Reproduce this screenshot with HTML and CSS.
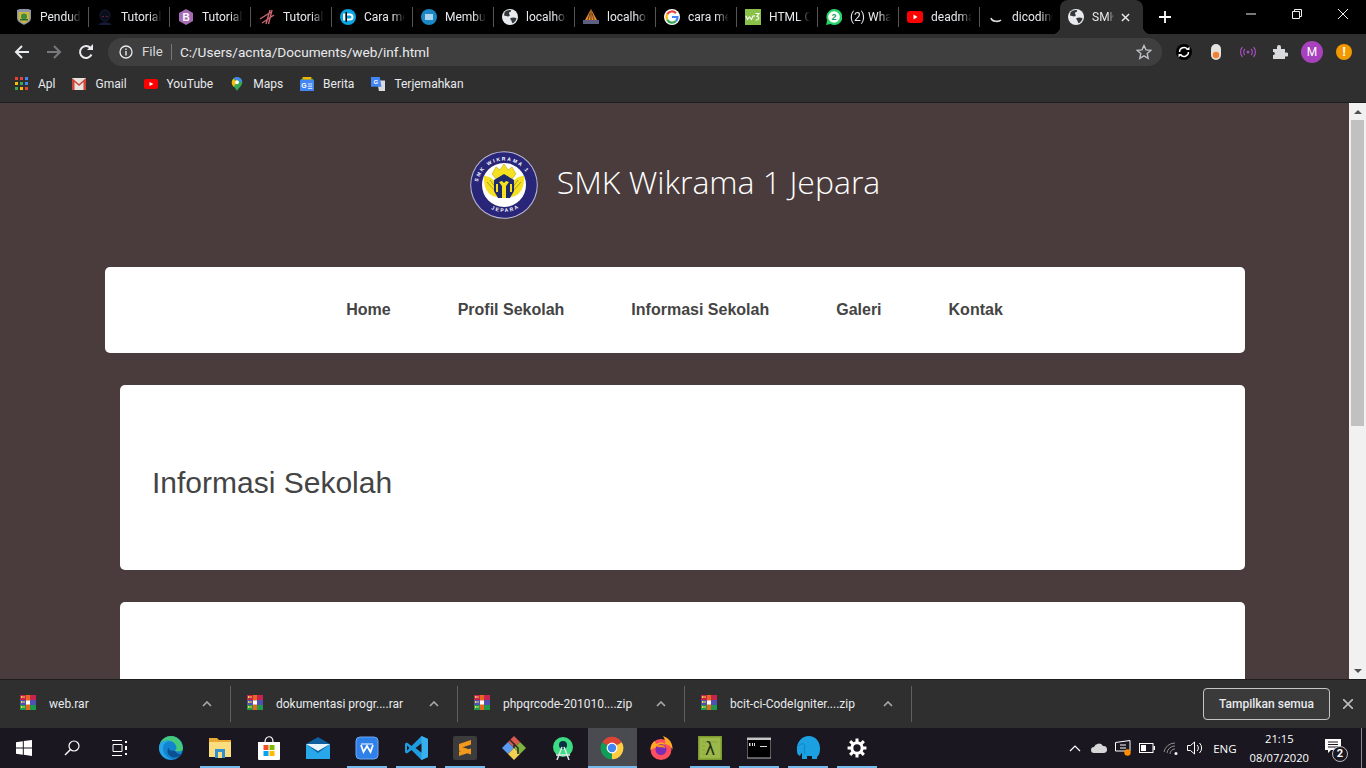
FILE: index.html
```html
<!DOCTYPE html>
<html lang="en">
<head>
  <meta charset="UTF-8">
  <title>SMK Wikrama 1 Jepara</title>
  <link rel="stylesheet" href="styles.css">
</head>
<body>
  <svg class="defs" width="0" height="0"><defs>
    <g id="globe"><circle cx="8" cy="8" r="8" fill="#e8eaed"/><path d="M2.500 3.500C4 1.500 7 .8 9 1.200c.5 1-.5 2-2 2.300-.3 1.500 1 2 .7 3.300-1.500 1.300-3.500.2-5.700-.3z" fill="#33363a"/><path d="M8.500 9c2-.8 4.500-.8 6 .3-.4 2.300-2 4.200-3.800 5-.8-.8-1-2-1.300-2.800-.8-.5-1.200-1.500-.9-2.500z" fill="#33363a"/></g>
    <g id="rar"><rect width="16" height="5" fill="#c8234d"/><rect y="5" width="16" height="5" fill="#5050b0"/><rect y="10" width="16" height="5" fill="#1f9a4a"/><rect x="6" width="4" height="15" fill="#e8661f"/><rect x="6" y="5.500" width="4" height="4" fill="#fff"/><path d="M1 1h1.500v2H1zM1 6h1.500v2H1zM1 11h1.500v2H1z" fill="#f4d84a"/><path d="M3.500 1h1v2h-1zM3.500 6h1v2h-1zM3.500 11h1v2h-1z" fill="#f4d84a"/></g>
  </defs></svg>

  <div class="tabstrip">
    <div class="tab sep"><svg class="fav" viewBox="0 0 16 16"><path d="M1 1l3-1h8l3 1v8c0 4-4 5-7 7-3-2-7-3-7-7z" fill="#8d93a8"/><path d="M2.500 3h11v6c0 3-3 4-5.500 5.500C5.500 13 2.500 12 2.500 9z" fill="#c9b83a"/><circle cx="8" cy="7.500" r="3" fill="#3f8a3f"/><path d="M4 10h8v1.500H4z" fill="#2f6a3f"/></svg><span class="tab-title">Pendud</span></div>
    <div class="tab sep"><svg class="fav" viewBox="0 0 16 16"><path d="M3 6a5 5 0 0 1 10 0c0 4-2 6-5 6s-5-2-5-6z" fill="#0b0d18" stroke="#1c2348" stroke-width=".8"/><path d="M1.500 16c1-4 12-4 13 0z" fill="#151a38"/><path d="M5 7h2v1H5zM9 7h2v1H9z" fill="#6a2330"/></svg><span class="tab-title">Tutorial</span></div>
    <div class="tab sep"><svg class="fav" viewBox="0 0 16 16"><path d="M8 0l7 4v8l-7 4-7-4V4z" fill="#a66bb5"/><text x="8" y="12" font-size="10" font-weight="700" text-anchor="middle" fill="#fff" font-family="Liberation Sans">B</text></svg><span class="tab-title">Tutorial</span></div>
    <div class="tab sep"><svg class="fav" viewBox="0 0 16 16"><path d="M1 10L12 3M3 14L15 6M7 15L11 1M9.500 15L13 1" stroke="#c9656f" stroke-width="1.400" fill="none"/></svg><span class="tab-title">Tutorial</span></div>
    <div class="tab sep"><svg class="fav" viewBox="0 0 16 16"><circle cx="8" cy="8" r="8" fill="#08a5e0"/><path d="M3 4.500h2.500v7H3zM7 4.500h3a3.500 3.500 0 0 1 0 7H7V9.500h3a1.500 1.500 0 0 0 0-3H7z" fill="#fff"/><path d="M5.500 3h1.500v10H5.500z" fill="#000"/></svg><span class="tab-title">Cara me</span></div>
    <div class="tab sep"><svg class="fav" viewBox="0 0 16 16"><circle cx="8" cy="8" r="8" fill="#1b87c4"/><rect x="4" y="5" width="8" height="6" fill="#a9d6ee"/></svg><span class="tab-title">Membu</span></div>
    <div class="tab sep"><svg class="fav" viewBox="0 0 16 16"><use href="#globe"/></svg><span class="tab-title">localhos</span></div>
    <div class="tab sep"><svg class="fav" viewBox="0 0 16 16"><path d="M2 11L8 0l6 11z" fill="#e98a2b"/><path d="M8 1v10M5 11l2-7M11 11L9 4" stroke="#40261a" stroke-width=".8" fill="none"/><rect x="0" y="11" width="16" height="4" fill="#5d5f80"/></svg><span class="tab-title">localhos</span></div>
    <div class="tab sep"><svg class="fav" viewBox="0 0 16 16"><circle cx="8" cy="8" r="8" fill="#fff"/><path d="M8 8h5.500A5.500 5.500 0 0 1 12 12" fill="none" stroke="#4285f4" stroke-width="2.200"/><path d="M11.900 4.100A5.500 5.500 0 0 0 3.200 5.300" fill="none" stroke="#ea4335" stroke-width="2.200"/><path d="M3.200 5.300a5.500 5.500 0 0 0 0 5.400" fill="none" stroke="#fbbc05" stroke-width="2.200"/><path d="M3.200 10.700A5.500 5.500 0 0 0 12 12" fill="none" stroke="#34a853" stroke-width="2.200"/></svg><span class="tab-title">cara me</span></div>
    <div class="tab sep"><svg class="fav" viewBox="0 0 16 16"><rect width="16" height="16" fill="#8ac249"/><path d="M1 7l1.500 3.500L4.500 8l2 2.500L8 7h2M10.500 4.500H14L12 7.500c2.500 0 2.500 4-1.500 3.500" stroke="#fff" stroke-width="1.100" fill="none"/></svg><span class="tab-title">HTML C</span></div>
    <div class="tab sep"><svg class="fav" viewBox="0 0 16 16"><path d="M0 16l1.200-4.500A8 8 0 1 1 4.500 15z" fill="#25d366"/><circle cx="8" cy="8" r="5.800" fill="#fff"/><text x="8" y="11" font-size="9" font-weight="700" text-anchor="middle" fill="#0f9d58" font-family="Liberation Sans">2</text></svg><span class="tab-title">(2) Wha</span></div>
    <div class="tab sep"><svg class="fav" viewBox="0 0 16 16"><rect y="2" width="16" height="12" rx="3" fill="#f00"/><path d="M6.500 5.500l4 2.500-4 2.500z" fill="#fff"/></svg><span class="tab-title">deadma</span></div>
    <div class="tab"><svg class="fav" viewBox="0 0 16 16"><path d="M3 9c1 4 8 4 10 2" stroke="#ddd" stroke-width="1.600" fill="none"/></svg><span class="tab-title">dicoding</span></div>
    <div class="tab tab-active"><svg class="fav" viewBox="0 0 16 16"><use href="#globe"/></svg><span class="tab-title">SMK</span><svg class="tab-x" viewBox="0 0 10 10"><path d="M1 1l8 8M9 1l-8 8" stroke="#e8eaed" stroke-width="1.600"/></svg></div>
    <svg class="newtab" viewBox="0 0 12 12"><path d="M6 0v12M0 6h12" stroke="#fff" stroke-width="1.800"/></svg>
    <div class="win-btns">
      <svg viewBox="0 0 10 10"><path d="M0 5h10" stroke="#eee"/></svg>
      <svg viewBox="0 0 10 10"><path d="M.5 2.500h7v7h-7zM2.500 2.500v-2h7v7h-2" stroke="#eee" fill="none"/></svg>
      <svg viewBox="0 0 10 10"><path d="M0 0l10 10M10 0L0 10" stroke="#eee"/></svg>
    </div>
  </div>

  <div class="toolbar">
    <svg class="nav-ic" viewBox="0 0 16 16"><path d="M15 8H2M8 2L2 8l6 6" stroke="#e8eaed" stroke-width="2" fill="none"/></svg>
    <svg class="nav-ic" viewBox="0 0 16 16"><path d="M1 8h13M8 2l6 6-6 6" stroke="#77797c" stroke-width="2" fill="none"/></svg>
    <svg class="nav-ic" viewBox="0 0 16 16"><path d="M13.500 10.500A6 6 0 1 1 12.500 4" stroke="#e8eaed" stroke-width="2" fill="none"/><path d="M9 6h6V0z" fill="#e8eaed"/></svg>
    <div class="omnibox">
      <svg class="info" viewBox="0 0 14 14"><circle cx="7" cy="7" r="6" stroke="#e8eaed" stroke-width="1.300" fill="none"/><path d="M7 6v4.500M7 3.500v1.500" stroke="#e8eaed" stroke-width="1.400"/></svg>
      <span class="scheme">File</span>
      <span class="url">C:/Users/acnta/Documents/web/inf.html</span>
      <svg class="star" viewBox="0 0 16 16"><path d="M8 1.500l2 4.400 4.700.5-3.500 3.200 1 4.700L8 11.900l-4.200 2.400 1-4.700L1.300 6.400 6 5.900z" stroke="#bdc1c6" stroke-width="1.400" fill="none"/></svg>
    </div>
    <div class="ext-icons">
      <svg viewBox="0 0 16 16"><circle cx="8" cy="8" r="8" fill="#000"/><path d="M3.500 8a4.500 4.500 0 0 1 8-2.800M12.500 8a4.500 4.500 0 0 1-8 2.800" stroke="#fff" stroke-width="1.400" fill="none"/><path d="M10 6h3.500V2.500zM6 10H2.500v3.500z" fill="#fff"/></svg>
      <svg viewBox="0 0 16 16"><rect x="3" y="0" width="10" height="16" rx="5" fill="#e6e2de"/><circle cx="8" cy="11" r="3.200" fill="#f28033"/></svg>
      <svg viewBox="0 0 16 16"><circle cx="8" cy="8" r="1.500" fill="#a24dbb"/><path d="M5 5a4 4 0 0 0 0 6M11 5a4 4 0 0 1 0 6M2.500 3a7.500 7.500 0 0 0 0 10M13.500 3a7.500 7.500 0 0 1 0 10" stroke="#a24dbb" stroke-width="1.200" fill="none"/></svg>
      <svg viewBox="0 0 16 16"><path d="M1 5h4V3a2 2 0 0 1 4 0v2h4v3.500h1.500a2 2 0 0 1 0 4H13V15H1v-4h1a2 2 0 0 0 0-3H1z" fill="#d8dadd"/></svg>
      <span class="avatar">M</span>
      <span class="alert">!</span>
    </div>
  </div>

  <div class="bookmarks">
    <div class="bm"><svg class="bm-ic" viewBox="0 0 14 14"><path d="M0 0h3v3H0z" fill="#ea4335"/><path d="M5 0h3v3H5z" fill="#ea4335"/><path d="M10 0h3v3h-3z" fill="#4285f4"/><path d="M0 5h3v3H0z" fill="#fbbc05"/><path d="M5 5h3v3H5z" fill="#34a853"/><path d="M10 5h3v3h-3z" fill="#4285f4"/><path d="M0 10h3v3H0z" fill="#34a853"/><path d="M5 10h3v3H5z" fill="#fbbc05"/><path d="M10 10h3v3h-3z" fill="#ea4335"/></svg>Apl</div>
    <div class="bm"><svg class="bm-ic" viewBox="0 0 14 12"><rect width="14" height="12" fill="#e8e3de"/><path d="M0 0l7 6 7-6v12h-2.500V4L7 8 2.500 4v8H0z" fill="#d0453a"/></svg>Gmail</div>
    <div class="bm"><svg class="bm-ic" viewBox="0 0 14 10"><rect width="14" height="10" rx="2" fill="#f00"/><path d="M5.500 3l4 2-4 2z" fill="#fff"/></svg>YouTube</div>
    <div class="bm"><svg class="bm-ic" viewBox="0 0 12 16"><path d="M6 0a6 6 0 0 1 6 6c0 4-4 6-6 10-2-4-6-6-6-10a6 6 0 0 1 6-6z" fill="#34a853"/><path d="M6 0a6 6 0 0 1 6 6L2 2a6 6 0 0 1 4-2z" fill="#4285f4"/><path d="M0 6a6 6 0 0 1 2-4l4 4-4 5c-1-1-2-3-2-5z" fill="#fbbc05"/><circle cx="6" cy="6" r="2.200" fill="#fff"/></svg>Maps</div>
    <div class="bm"><svg class="bm-ic" viewBox="0 0 16 16"><path d="M1 2h14v4H1z" fill="#4caf50"/><path d="M3 0h10v3H3z" fill="#f4b400"/><rect y="3" width="16" height="13" rx="1" fill="#4285f4"/><path d="M9 8h5M9 10.500h5M9 13h5" stroke="#fff"/><text x="4.500" y="13" font-size="8" font-weight="700" text-anchor="middle" fill="#fff" font-family="Liberation Sans">G</text></svg>Berita</div>
    <div class="bm"><svg class="bm-ic" viewBox="0 0 16 16"><path d="M7 4h9v12H9z" fill="#dadce0"/><path d="M0 0h10l2 11H0z" fill="#4285f4"/><text x="5.500" y="8" font-size="7" font-weight="700" text-anchor="middle" fill="#fff" font-family="Liberation Sans">G</text></svg>Terjemahkan</div>
  </div>

  <div class="viewport">
    <div class="page">
      <header class="site-head">
        <svg class="logo" viewBox="0 0 68 68">
          <circle cx="34" cy="34" r="33.800" fill="#b9b8d8"/>
          <circle cx="34" cy="34" r="32.800" fill="#29267a"/>
          <circle cx="34" cy="34" r="22" fill="#fff"/>
          <path d="M14 25c4 0 9 2 11 6l3 15c-7 0-15-6-14-21zM54 25c-4 0-9 2-11 6l-3 15c7 0 15-6 14-21z" fill="#f5e120"/>
          <path d="M17 31l8 9M20 29l6 8M42 37l6-8M43 40l8-9" stroke="#8a8a30" stroke-width=".8"/>
          <path d="M22 23l4-7 4 3 4-6 4 6 4-3 4 7-4 5H26z" fill="#f5e120" stroke="#b9a520" stroke-width=".6"/>
          <path d="M34 23l10 6v11l-4 7H28l-4-7V29z" fill="#1d2b6e"/>
          <path d="M29 31l3 4v12h4V35l3-4-3-1-2 2-2-2z" fill="#f5e120"/>
          <path d="M26 33h2v8h-2zM40 33h2v8h-2z" fill="#f5e120"/>
          <path id="rim" d="M7.500 36a26.500 26.500 0 0 1 53 0" fill="none"/>
          <text font-size="5" font-weight="700" fill="#fff" font-family="Liberation Sans" letter-spacing="1.700"><textPath href="#rim" startOffset="5">SMK WIKRAMA 1</textPath></text>
          <path id="rimb" d="M13 52a29 29 0 0 0 42 0" fill="none"/>
          <text font-size="5" font-weight="700" fill="#fff" font-family="Liberation Sans" letter-spacing="1.700"><textPath href="#rimb" startOffset="10">JEPARA</textPath></text>
        </svg>
        <h1 class="site-title">SMK Wikrama 1 Jepara</h1>
      </header>
      <nav class="main-nav">
        <a>Home</a>
        <a>Profil Sekolah</a>
        <a>Informasi Sekolah</a>
        <a>Galeri</a>
        <a>Kontak</a>
      </nav>
      <section class="card card-title">
        <h2>Informasi Sekolah</h2>
      </section>
      <section class="card card-next"></section>
    </div>
    <div class="scrollbar">
      <svg class="sb-arrow" viewBox="0 0 8 4"><path d="M0 4l4-4 4 4z" fill="#505050"/></svg>
      <div class="sb-track"><div class="sb-thumb"></div></div>
      <svg class="sb-arrow" viewBox="0 0 8 4"><path d="M0 0l4 4 4-4z" fill="#505050"/></svg>
    </div>
  </div>

  <div class="downloads">
    <div class="dl"><svg class="rar" viewBox="0 0 16 15"><use href="#rar"/></svg><span class="dl-name">web.rar</span><svg class="caret" viewBox="0 0 10 6"><path d="M1 5l4-4 4 4" stroke="#a9abad" stroke-width="1.600" fill="none"/></svg></div>
    <div class="dl"><svg class="rar" viewBox="0 0 16 15"><use href="#rar"/></svg><span class="dl-name">dokumentasi progr....rar</span><svg class="caret" viewBox="0 0 10 6"><path d="M1 5l4-4 4 4" stroke="#a9abad" stroke-width="1.600" fill="none"/></svg></div>
    <div class="dl"><svg class="rar" viewBox="0 0 16 15"><use href="#rar"/></svg><span class="dl-name">phpqrcode-201010....zip</span><svg class="caret" viewBox="0 0 10 6"><path d="M1 5l4-4 4 4" stroke="#a9abad" stroke-width="1.600" fill="none"/></svg></div>
    <div class="dl"><svg class="rar" viewBox="0 0 16 15"><use href="#rar"/></svg><span class="dl-name">bcit-ci-CodeIgniter....zip</span><svg class="caret" viewBox="0 0 10 6"><path d="M1 5l4-4 4 4" stroke="#a9abad" stroke-width="1.600" fill="none"/></svg></div>
    <button class="show-all">Tampilkan semua</button>
    <svg class="dl-close" viewBox="0 0 10 10"><path d="M0 0l10 10M10 0L0 10" stroke="#bdbdbd" stroke-width="1.600"/></svg>
  </div>

  <div class="taskbar">
    <svg class="win-logo" viewBox="0 0 16 16"><path d="M0 2.200l6.800-1v6.300H0zM7.800 1l8.200-1v7.500H7.800zM0 8.500h6.800v6.300l-6.800-1zM7.800 8.500H16V16l-8.200-1.200z" fill="#fff"/></svg>
    <svg class="tb-small" viewBox="0 0 16 16"><circle cx="10" cy="6" r="5" stroke="#fff" stroke-width="1.200" fill="none"/><path d="M6.500 9.500L1 15" stroke="#fff" stroke-width="1.400"/></svg>
    <svg class="tb-small" viewBox="0 0 16 16"><path d="M0 .500h10M0 15.500h10M1 4.500h9v7H1z" stroke="#fff" fill="none"/><path d="M13 1h2v2h-2zM13 6h2v4h-2zM13 13h2v2h-2z" fill="#fff"/></svg>
    <div class="tb-apps">
      <span class="app"><svg viewBox="0 0 24 24"><circle cx="12" cy="12" r="12" fill="#1285d0"/><path d="M24 13C24 6 18.500 0 12 0 7 0 2.500 3 1 8c3-3.500 8-4.500 12-2.500 3 1.500 4.500 4 4.500 6.500 0 1-.5 2-2 2.500 3 1.500 8.500 1 8.500-1.500z" fill="#45c97a"/><path d="M1 8c3-3.500 8-4.500 12-2.500-5-1-9 2-9 7 0 5 4 10 10 11C6 24.500 0 18 0 12c0-1.500.3-3 1-4z" fill="#29a4e6"/><path d="M15.500 14.500c-3 1-6-.500-6-3-2.500 4-.5 9 5 10 3.500.5 6.500-1 8.500-3.500-3 1-5.500-1-7.500-3.500z" fill="#0c4f93"/></svg></span>
      <span class="app on"><svg viewBox="0 0 24 20"><path d="M1 0h8l2 2h12v17H1z" fill="#e8a935"/><path d="M1 4h22v15H1z" fill="#f9dd7f"/><path d="M7 11h10v9H7z" fill="#2f8fd0"/><path d="M10 14h4v6h-4z" fill="#f9dd7f"/></svg></span>
      <span class="app"><svg viewBox="0 0 24 24"><path d="M8 6c0-7 8-7 8 0" stroke="#fff" fill="none" stroke-width="1.200"/><path d="M1 6h22v17a1 1 0 0 1-1 1H2a1 1 0 0 1-1-1z" fill="#fff"/><path d="M6.500 9H11.500v5h-5z" fill="#f25022"/><path d="M12.500 9h5v5h-5z" fill="#7fba00"/><path d="M6.500 15h5v5h-5z" fill="#00a4ef"/><path d="M12.500 15h5v5h-5z" fill="#ffb900"/></svg></span>
      <span class="app"><svg viewBox="0 0 24 24"><path d="M12 1l12 7v15H0V8z" fill="#0f5f9e"/><path d="M0 8l12 9 12-9v15H0z" fill="#28a8ea"/><path d="M0 8h24l-12 7z" fill="#e8f4fb"/></svg></span>
      <span class="app on"><svg viewBox="0 0 24 24"><rect x="1" y="1" width="22" height="22" rx="4" fill="#2f80e8" stroke="#6aa8f2"/><path d="M6 9l2.500 7L12 10l3.500 6L18 9" stroke="#fff" stroke-width="1.800" fill="none"/><path d="M6 8h12" stroke="#fff" stroke-width="1"/></svg></span>
      <span class="app on"><svg viewBox="0 0 24 24"><path d="M17.500 0L7.500 10 3 6.500 1 7.500v9l2 1 4.500-3.500 10 10 6.500-3V3z" fill="#1f9be0"/><path d="M18 7v10l-6.500-5z" fill="#1a1720"/><path d="M3 9.500v5l2.500-2.500z" fill="#1a1720"/><path d="M17.500 0L24 3v18l-6.500 3z" fill="#38b0ee"/></svg></span>
      <span class="app on"><svg viewBox="0 0 24 24"><rect width="24" height="24" rx="2" fill="#3c3c3c"/><path d="M18 4v4.500L6 12.500V8zM6 10l12 4v4.500L6 14.500zM18 12.500V16L6 20v-4.500z" fill="#f39a1c"/></svg></span>
      <span class="app"><svg viewBox="0 0 24 24"><path d="M12 0l6 6-6 6-6-6z" fill="#d9584b"/><path d="M0 12l6-6 6 6-6 6z" fill="#5b9bf0"/><path d="M12 12l6-6 6 6-6 6z" fill="#7fb53f"/><path d="M6 18l6-6 6 6-6 6z" fill="#f0d050"/><path d="M8 4l8 8v6M12 12v-5" stroke="#2a2a2a" stroke-width="1.500" fill="none"/></svg></span>
      <span class="app"><svg viewBox="0 0 24 24"><circle cx="12" cy="11" r="10" fill="#3ddc84"/><circle cx="12" cy="9" r="4" fill="#083042"/><path d="M11 11L6 24M13 11l5 13M5 19h14" stroke="#dfe7e8" stroke-width="1.500" fill="none"/></svg></span>
      <span class="app app-active"><svg viewBox="0 0 24 24"><path d="M12 12L2.200 6.300A11.300 11.300 0 0 1 21.800 6.300z" fill="#db4437"/><path d="M12 12L2.200 6.300A11.300 11.300 0 0 0 12 23.300z" fill="#0f9d58"/><path d="M12 12L21.800 6.300A11.300 11.300 0 0 1 12 23.300z" fill="#ffcd40"/><circle cx="12" cy="12" r="5.400" fill="#fff"/><circle cx="12" cy="12" r="4.200" fill="#4285f4"/></svg></span>
      <span class="app"><svg viewBox="0 0 24 24"><circle cx="12" cy="13.500" r="10.500" fill="#ff4f5e"/><path d="M1.500 13.500C1.500 9 4 6 6 5c0 2 1 3 2 3 2-2 6-2 8 0 1-3-1-6-2-8 6 2 10 7 9.500 13.500-2-3-4-5-7-5.500z" fill="#ffa925"/><circle cx="12" cy="13.500" r="5.500" fill="#7b2db5"/><path d="M6.500 10c3-2 9-2 10 2-3-1-7 0-10-2z" fill="#ff8a1f"/></svg></span>
      <span class="app on"><svg viewBox="0 0 24 24"><rect width="24" height="24" fill="#7a9a2e"/><rect x="1.500" y="1.500" width="21" height="21" fill="#9cb84a"/><path d="M4 6h16M4 10h3M4 14h3M4 18h3" stroke="#88a53c" fill="none"/><text x="12" y="19" font-size="17" text-anchor="middle" fill="#24301a" font-family="DejaVu Sans">λ</text></svg></span>
      <span class="app on"><svg viewBox="0 0 24 20"><rect width="24" height="20" fill="#000" stroke="#b8b8b8"/><rect width="24" height="2" fill="#c6c6c6"/><path d="M2 5h1.500v3H2zM5 5h1v3H5zM7 5h1v3H7zM13 8h7v1h-7z" fill="#ddd"/></svg></span>
      <span class="app on"><svg viewBox="0 0 24 24"><path d="M1 15C0 6 6 0 13 0c6 0 11 5 11 12 0 5-1 7-3 9v2h-5v-3h-5v3H6v-6c-1 0-1 1-2 3-2-1-3-2-3-5z" fill="#1ba1e2"/><path d="M3 10c2-3 5-3 6 0-1 3-1 6 0 8" stroke="#0f7fc0" fill="none"/></svg></span>
      <span class="app on"><svg viewBox="-2 -2 28 28"><circle cx="12" cy="12" r="6" fill="none" stroke="#fff" stroke-width="3.500"/><path d="M12 1v5M12 18v5M1 12h5M18 12h5M4 4l4 4M16 16l4 4M20 4l-4 4M8 16l-4 4" stroke="#fff" stroke-width="3.500"/></svg></span>
    </div>
    <div class="tray">
      <svg class="tray-up" viewBox="0 0 12 7"><path d="M1 6l5-5 5 5" stroke="#fff" fill="none" stroke-width="1.200"/></svg>
      <svg class="tray-cloud" viewBox="0 0 16 10"><path d="M3 10a3 3 0 0 1 0-6 5 5 0 0 1 9-1 3.500 3.500 0 0 1 1 7z" fill="#d6d6d6"/></svg>
      <svg class="tray-ic" viewBox="0 0 16 16"><path d="M.500 2.500L15 .500V11H.500z" stroke="#fff" fill="none"/><path d="M5 5h6M5 8h6" stroke="#fff"/><circle cx="12.500" cy="12.500" r="3.200" fill="#ff8c00"/></svg>
      <svg class="tray-ic" viewBox="0 0 16 10"><rect x=".5" y=".5" width="13.500" height="9" stroke="#fff" fill="none"/><rect x="2" y="2" width="5" height="6" fill="#fff"/><rect x="14.500" y="3" width="1.500" height="4" fill="#fff"/></svg>
      <svg class="tray-ic" viewBox="0 0 16 16"><path d="M1 12a11 11 0 0 1 11-9M4 13a8 8 0 0 1 8-7M7 14a5 5 0 0 1 5-5" stroke="#8f8f8f" fill="none"/><circle cx="13" cy="13.500" r="1.500" fill="#fff"/></svg>
      <svg class="tray-ic" viewBox="0 0 16 16"><path d="M.500 5.500h3l4-3.500v12l-4-3.500h-3z" stroke="#fff" fill="none"/><path d="M10 5a4 4 0 0 1 0 6M12.500 3a7 7 0 0 1 0 10" stroke="#fff" fill="none"/></svg>
      <span class="lang">ENG</span>
      <div class="clock"><span>21:15</span><span>08/07/2020</span></div>
      <div class="notif"><svg viewBox="0 0 16 16"><path d="M0 0h16v11H6l-3 3v-3H0z" fill="#fff"/><path d="M3 3h10M3 5.500h10M3 8h10" stroke="#1a1720"/></svg><span class="notif-badge">2</span></div>
      <div class="desktop-edge"></div>
    </div>
  </div>
</body>
</html>
```

FILE: styles.css
```css
* {
  margin: 0;
  padding: 0;
  box-sizing: border-box;
}

html, body {
  height: 768px;
  overflow: hidden;
}

body {
  display: flex;
  flex-direction: column;
  font-family: 'Roboto', 'Noto Sans', sans-serif;
  font-size: 12px;
  background: #2f2f2f;
}

.defs {
  position: absolute;
}

.tabstrip {
  height: 34px;
  background: #000;
  display: flex;
  align-items: center;
  padding-left: 8px;
  color: #e8eaed;
  flex-shrink: 0;
}

.tab {
  width: 81px;
  height: 34px;
  display: flex;
  align-items: center;
  padding-left: 8px;
  flex-shrink: 0;
}

.tab.sep {
  background: linear-gradient(#555, #555) no-repeat right 7px / 1px 20px;
}

.fav {
  width: 16px;
  height: 16px;
  flex-shrink: 0;
  margin-right: 8px;
}

.tab-title {
  width: 41px;
  white-space: nowrap;
  -webkit-mask-image: linear-gradient(90deg, #000 70%, transparent);
  mask-image: linear-gradient(90deg, #000 70%, transparent);
}

.tab-active {
  width: 83px;
  margin-left: -1px;
  background: #2f2f2f;
  border-radius: 8px 8px 0 0;
  position: relative;
}

.tab-active::before,
.tab-active::after {
  content: "";
  position: absolute;
  bottom: 0;
  width: 8px;
  height: 8px;
}

.tab-active::before {
  left: -8px;
  background: radial-gradient(circle at 0 0, transparent 8px, #2f2f2f 8.500px);
}

.tab-active::after {
  right: -8px;
  background: radial-gradient(circle at 100% 0, transparent 8px, #2f2f2f 8.500px);
}

.tab-active .tab-title {
  width: 22px;
}

.tab-x {
  width: 9px;
  height: 9px;
  margin-left: 7px;
}

.newtab {
  width: 12px;
  height: 12px;
  margin-left: 16px;
}

.win-btns {
  margin-left: auto;
  display: flex;
  height: 28px;
  align-self: flex-start;
  align-items: center;
}

.win-btns svg {
  width: 10px;
  height: 10px;
  margin: 0 18px;
}

.toolbar {
  height: 36px;
  display: flex;
  align-items: center;
  padding-left: 14px;
  flex-shrink: 0;
}

.nav-ic {
  width: 16px;
  height: 16px;
  margin-right: 16px;
}

.omnibox {
  width: 1054px;
  height: 28px;
  margin-left: -2px;
  background: #3f3f3f;
  border-radius: 14px;
  display: flex;
  align-items: center;
  padding-left: 11px;
  color: #e8eaed;
  font-size: 14px;
}

.info {
  width: 14px;
  height: 14px;
  margin-right: 9px;
}

.scheme {
  font-size: 13.300px;
  color: #d8d9db;
  padding-right: 8px;
  margin-right: 8px;
  border-right: 1px solid #777;
  line-height: 16px;
}

.url {
  font-size: 13.600px;
}

.star {
  width: 16px;
  height: 16px;
  margin-left: auto;
  margin-right: 10px;
}

.ext-icons {
  display: flex;
  align-items: center;
  gap: 16px;
  margin-left: 14px;
}

.ext-icons svg {
  width: 16px;
  height: 16px;
}

.avatar {
  width: 22px;
  height: 22px;
  margin: 0 -3px;
  border-radius: 50%;
  background: #a742bc;
  color: #fff;
  font-size: 12px;
  text-align: center;
  line-height: 22px;
}

.alert {
  width: 16px;
  height: 16px;
  border-radius: 50%;
  background: #f29900;
  color: #fff;
  font-weight: 700;
  font-size: 12px;
  text-align: center;
  line-height: 16px;
}

.bookmarks {
  height: 33px;
  display: flex;
  align-items: center;
  padding-left: 15px;
  padding-bottom: 4px;
  gap: 17px;
  color: #e8eaed;
  flex-shrink: 0;
  border-bottom: 1px solid #1d1d1d;
}

.bm {
  display: flex;
  align-items: center;
  white-space: nowrap;
}

.bm-ic {
  width: 14px;
  height: 14px;
  margin-right: 9px;
}

.viewport {
  flex: 1;
  min-height: 0;
  display: flex;
}

.page {
  flex: 1;
  min-width: 0;
  overflow: hidden;
  background: #4a3c3c;
  padding: 48px 0 0 105px;
}

.site-head {
  display: flex;
  align-items: center;
  width: 1140px;
  justify-content: center;
  height: 68px;
  color: #fff;
  margin-bottom: 48px;
}

.logo {
  width: 68px;
  height: 68px;
  margin-right: 19px;
}

.site-title {
  font-family: 'Open Sans', sans-serif;
  font-weight: 300;
  font-size: 32px;
  padding-bottom: 8px;
}

.main-nav {
  width: 1140px;
  height: 86px;
  background: #fff;
  border-radius: 5px;
  display: flex;
  justify-content: center;
  align-items: center;
  gap: 67px;
  padding-right: 1px;
}

.main-nav a {
  font-family: 'Liberation Sans', Arial, sans-serif;
  font-weight: 700;
  font-size: 16px;
  color: #444;
}

.card {
  width: 1125px;
  margin-left: 15px;
  background: #fff;
  border-radius: 5px;
}

.card-title {
  height: 185px;
  margin-top: 32px;
  padding: 80px 32px 0;
}

.card-title h2 {
  font-family: 'Liberation Sans', Arial, sans-serif;
  font-weight: 400;
  font-size: 30px;
  line-height: 36px;
  color: #444;
}

.card-next {
  height: 200px;
  margin-top: 32px;
}

.scrollbar {
  width: 17px;
  background: #f1f1f1;
  display: flex;
  flex-direction: column;
  align-items: center;
}

.sb-arrow {
  width: 8px;
  height: 4px;
  margin: 7px 0 6px;
}

.sb-track {
  flex: 1;
  width: 100%;
  padding: 0 2px;
}

.sb-thumb {
  height: 306px;
  background: #c1c1c1;
}

.downloads {
  height: 49px;
  background: #2f2f2f;
  border-top: 1px solid #1d1d1d;
  display: flex;
  align-items: center;
  color: #e8eaed;
  flex-shrink: 0;
}

.dl {
  width: 227px;
  height: 36px;
  display: flex;
  align-items: center;
  padding-left: 16px;
  border-right: 1px solid #606060;
}

.dl:first-child {
  width: 231px;
  padding-left: 20px;
}

.rar {
  width: 16px;
  height: 15px;
  margin-top: -4px;
}

.dl-name {
  margin-left: 13px;
  flex: 1;
  white-space: nowrap;
}

.caret {
  width: 10px;
  height: 6px;
  margin-right: 18px;
}

.show-all {
  margin-left: auto;
  width: 127px;
  height: 32px;
  background: #3a3a3a;
  border: 1px solid #c4c4c4;
  border-radius: 4px;
  color: #e8eaed;
  font-family: 'Roboto', sans-serif;
  font-weight: 500;
  font-size: 12px;
}

.dl-close {
  width: 10px;
  height: 10px;
  margin: 0 13px 0 13px;
}

.taskbar {
  height: 40px;
  background: #1a1720;
  display: flex;
  align-items: center;
  color: #fff;
  flex-shrink: 0;
}

.win-logo {
  width: 16px;
  height: 16px;
  margin-left: 16px;
}

.tb-small {
  width: 16px;
  height: 16px;
  margin-left: 32px;
}

.tb-apps {
  display: flex;
  margin-left: 18.500px;
  height: 40px;
}

.app {
  width: 49px;
  height: 40px;
  display: flex;
  align-items: center;
  justify-content: center;
}

.app svg {
  width: 24px;
  height: 24px;
}

.app.on {
  background: linear-gradient(#76b9ed, #76b9ed) no-repeat center bottom / 40px 2px;
}

.app-active {
  background: linear-gradient(#76b9ed, #76b9ed) no-repeat bottom / 100% 2px, #4a4b50;
}

.tray {
  margin-left: auto;
  display: flex;
  align-items: center;
  height: 40px;
  padding-right: 4px;
}

.tray-up {
  width: 12px;
  height: 7px;
  margin-right: 10px;
}

.tray-cloud {
  width: 16px;
  height: 10px;
  margin-right: 8px;
}

.tray-ic {
  width: 16px;
  height: 16px;
  margin-right: 8px;
}

.lang {
  font-family: 'Open Sans', sans-serif;
  font-size: 11.500px;
  margin: 0 13px 0 2px;
}

.clock {
  display: flex;
  flex-direction: column;
  align-items: center;
  font-family: 'Open Sans', sans-serif;
  font-size: 11.200px;
  line-height: 19px;
  margin-right: 16px;
}

.notif {
  position: relative;
  width: 18px;
  height: 18px;
  margin-right: 18px;
}

.notif svg {
  width: 16px;
  height: 16px;
}

.notif-badge {
  position: absolute;
  left: 7px;
  top: 7px;
  width: 16px;
  height: 16px;
  border-radius: 50%;
  border: 1px solid #bbb;
  background: #1a1720;
  font-size: 11px;
  font-weight: 700;
  text-align: center;
  line-height: 14px;
}

.desktop-edge {
  width: 1px;
  height: 40px;
  background: #8a8a8a;
}
```
